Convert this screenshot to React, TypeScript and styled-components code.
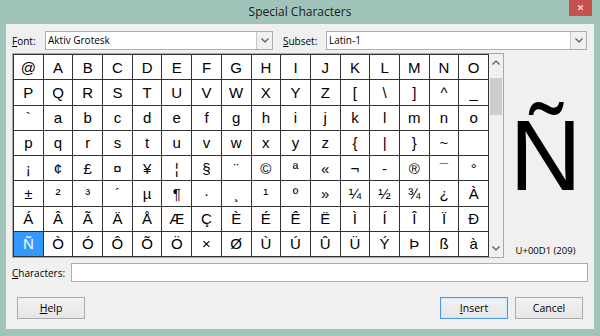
import styled, { createGlobalStyle } from "styled-components";

const GlobalStyle = createGlobalStyle`
  html, body {
    margin: 0;
    padding: 0;
    background: #a0c4ba;
  }
  body {
    font-family: "Open Sans", "Noto Sans", sans-serif;
  }
`;

const buildChars = () => {
  const list: number[] = [];
  for (let c = 0x40; c <= 0x7e; c++) list.push(c);
  for (let c = 0xa0; c <= 0xe0; c++) list.push(c);
  return list;
};

const chars = buildChars();
const selectedCode = 0xd1;

const showChar = (code: number) => {
  if (code === 0xa0) return "\u00a0";
  if (code === 0xad) return "-";
  return String.fromCharCode(code);
};

const Chevron = ({ up }: { up?: boolean }) => (
  <svg width="8" height="5" viewBox="0 0 8 5">
    <path
      d={up ? "M0.5 4.5 L4 1 L7.5 4.5" : "M0.5 0.5 L4 4 L7.5 0.5"}
      fill="none"
      stroke="#555"
      strokeWidth="1.2"
    />
  </svg>
);

const App = () => {
  return (
    <Frame>
      <GlobalStyle />
      <TitleBar>
        <span />
        <Title>Special Characters</Title>
        <CloseButton>✕</CloseButton>
      </TitleBar>

      <Client>
        <TopRow>
          <Label $width={33}>
            <u>F</u>ont:
          </Label>
          <Combo $width={228}>
            <ComboText>Aktiv Grotesk</ComboText>
            <ComboButton>
              <Chevron />
            </ComboButton>
          </Combo>
          <Label $width={43} $indent={10}>
            <u>S</u>ubset:
          </Label>
          <Combo>
            <ComboText>Latin-1</ComboText>
            <ComboButton>
              <Chevron />
            </ComboButton>
          </Combo>
        </TopRow>

        <Main>
          <GridBox>
            <CharGrid>
              {chars.map((code) => (
                <Cell key={code} $selected={code === selectedCode}>
                  {showChar(code)}
                </Cell>
              ))}
            </CharGrid>
            <ScrollBar>
              <ScrollArrow>
                <Chevron up />
              </ScrollArrow>
              <ScrollTrack>
                <ScrollThumb />
              </ScrollTrack>
              <ScrollArrow>
                <Chevron />
              </ScrollArrow>
            </ScrollBar>
          </GridBox>

          <Preview>
            <BigChar>Ñ</BigChar>
            <CodeLabel>U+00D1 (209)</CodeLabel>
          </Preview>
        </Main>

        <CharsRow>
          <Label $width={59}>
            <u>C</u>haracters:
          </Label>
          <TextInput />
        </CharsRow>

        <ButtonRow>
          <Button>
            <u>H</u>elp
          </Button>
          <Spacer />
          <Button $default>
            <u>I</u>nsert
          </Button>
          <Button>Cancel</Button>
        </ButtonRow>
      </Client>
    </Frame>
  );
};

const Frame = styled.div`
  width: 600px;
  height: 336px;
  background: #a0c4ba;
  display: flex;
  flex-direction: column;
  overflow: hidden;
`;

const TitleBar = styled.div`
  height: 24px;
  display: grid;
  grid-template-columns: 1fr auto 1fr;
  align-items: start;
`;

const Title = styled.div`
  font-family: "Open Sans", "Noto Sans", sans-serif;
  font-size: 12px;
  line-height: 24px;
  color: #1a1a1a;
`;

const CloseButton = styled.div`
  justify-self: end;
  margin-right: 8px;
  width: 23px;
  height: 16px;
  background: #c75050;
  color: #fff;
  font-family: "DejaVu Sans", sans-serif;
  font-size: 9px;
  font-weight: bold;
  display: flex;
  align-items: center;
  justify-content: center;
`;

const Client = styled.div`
  flex: 1;
  margin: 0 6px 7px 6px;
  background: #f0f0f0;
  padding: 7px 7px 0 6px;
  display: flex;
  flex-direction: column;
  font-size: 10px;
  color: #000;
`;

const TopRow = styled.div`
  display: flex;
  align-items: center;
  height: 19px;
`;

const Label = styled.div<{ $width: number; $indent?: number }>`
  width: ${(p) => p.$width}px;
  margin-left: ${(p) => p.$indent || 0}px;
  flex-shrink: 0;
  white-space: nowrap;
`;

const Combo = styled.div<{ $width?: number }>`
  box-sizing: border-box;
  height: 19px;
  ${(p) => (p.$width ? `width: ${p.$width}px;` : "flex: 1;")}
  background: #fff;
  border: 1px solid #abadb3;
  display: flex;
  align-items: stretch;
`;

const ComboText = styled.div`
  flex: 1;
  padding-left: 2px;
  line-height: 17px;
  white-space: nowrap;
`;

const ComboButton = styled.div`
  width: 15px;
  background: #f0f0f0;
  border-left: 1px solid #c8c8c8;
  display: flex;
  align-items: center;
  justify-content: center;
`;

const Main = styled.div`
  display: flex;
  margin-top: 3px;
  height: 205px;
`;

const GridBox = styled.div`
  box-sizing: border-box;
  width: 492px;
  height: 205px;
  border: 1px solid #a9a9a9;
  display: flex;
  background: #fff;
`;

const CharGrid = styled.div`
  flex: 1;
  display: grid;
  grid-template-columns: repeat(16, 1fr);
  grid-template-rows: repeat(8, 1fr);
  border-top: 1px solid #333;
  border-left: 1px solid #333;
  font-family: "Liberation Sans", Arial, sans-serif;
  font-size: 15px;
`;

const Cell = styled.div<{ $selected?: boolean }>`
  border-right: 1px solid #333;
  border-bottom: 1px solid #333;
  display: flex;
  align-items: center;
  justify-content: center;
  background: ${(p) => (p.$selected ? "#3399ff" : "#fff")};
  color: ${(p) => (p.$selected ? "#fff" : "#000")};
`;

const ScrollBar = styled.div`
  width: 14px;
  background: #f0f0f0;
  display: flex;
  flex-direction: column;
`;

const ScrollArrow = styled.div`
  height: 17px;
  display: flex;
  align-items: center;
  justify-content: center;
`;

const ScrollTrack = styled.div`
  flex: 1;
  padding: 7px 1px 0 1px;
`;

const ScrollThumb = styled.div`
  height: 37px;
  background: #cdcdcd;
`;

const Preview = styled.div`
  flex: 1;
  display: flex;
  flex-direction: column;
  align-items: center;
`;

const BigChar = styled.div`
  flex: 1;
  display: flex;
  align-items: center;
  justify-content: center;
  font-family: "Liberation Sans", Arial, sans-serif;
  font-size: 100px;
  line-height: 1;
  padding-top: 12px;
  color: #000;
`;

const CodeLabel = styled.div`
  font-size: 9.5px;
  line-height: 14px;
`;

const CharsRow = styled.div`
  display: flex;
  align-items: center;
  margin-top: 5px;
  height: 19px;
`;

const TextInput = styled.div`
  box-sizing: border-box;
  flex: 1;
  height: 19px;
  margin-right: -1px;
  background: #fff;
  border: 1px solid #abadb3;
`;

const ButtonRow = styled.div`
  display: flex;
  gap: 7px;
  margin-top: 15px;
  padding: 0 4px 0 5px;
`;

const Spacer = styled.div`
  flex: 1;
`;

const Button = styled.div<{ $default?: boolean }>`
  box-sizing: border-box;
  width: 68px;
  height: 22px;
  display: flex;
  align-items: center;
  justify-content: center;
  background: linear-gradient(#f2f2f2, #e6e6e6);
  border: 1px solid ${(p) => (p.$default ? "#4a98e6" : "#acacac")};
  box-shadow: ${(p) => (p.$default ? "inset 0 0 0 1px #cfe6fc" : "none")};
  font-size: 10.5px;
`;

export default App;
